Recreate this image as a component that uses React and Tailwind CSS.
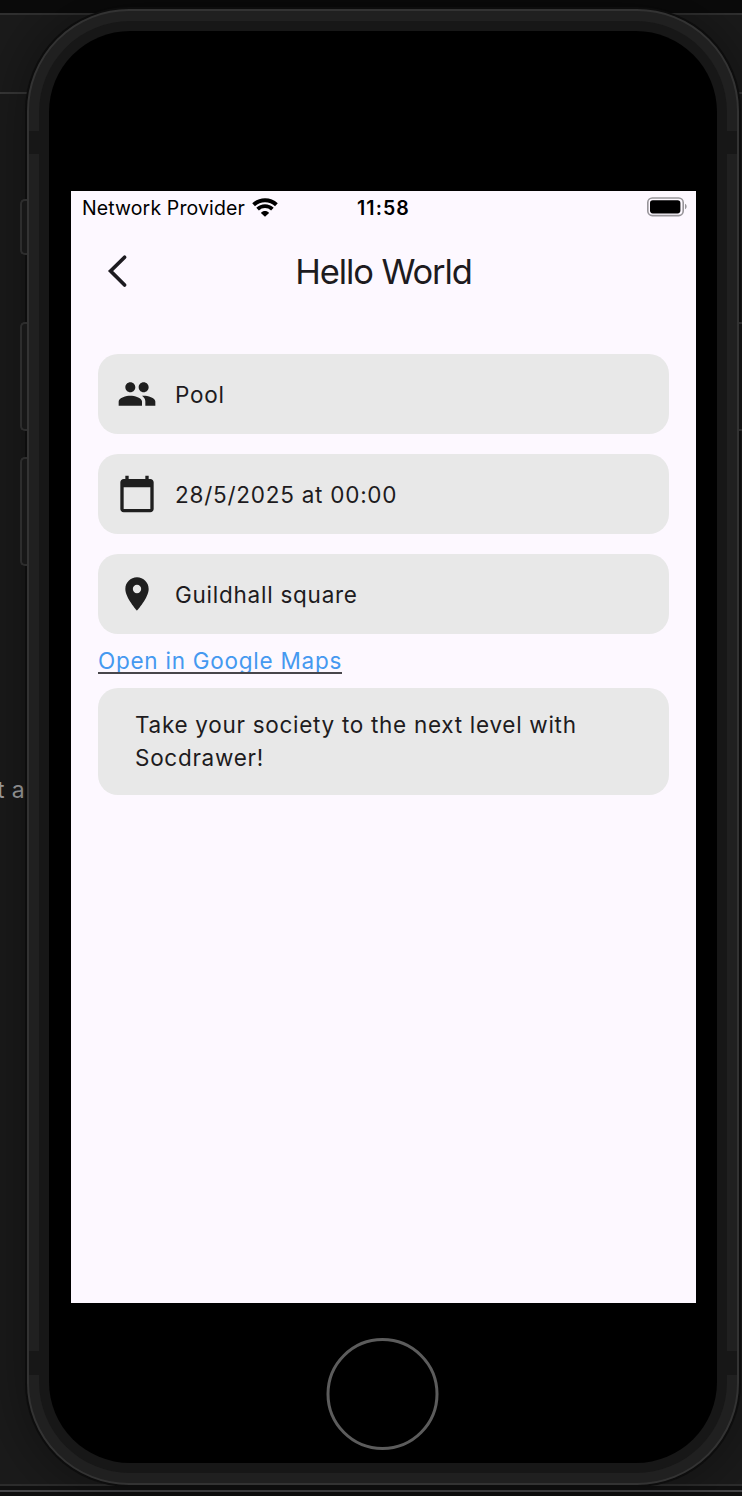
import React from "react";
import { MdPeople, MdCalendarToday, MdLocationOn } from "react-icons/md";

function Backdrop() {
  return (
    <div className="[grid-area:1/1] flex flex-col bg-[#1b1b1b] overflow-hidden">
      <div className="h-[13px] bg-[#0b0b0b]" />
      <div className="h-[2px] bg-[#303030]" />
      <div className="h-[77px]" />
      <div className="h-[2px] bg-[#383838]" />
      <div className="h-[1390px] pt-[682px]">
        <div className="w-[25px] flex justify-end whitespace-nowrap text-[23px] leading-[28px] tracking-[0.4px] text-[#a6a6a6]">
          t a
        </div>
      </div>
      <div className="h-[2px] bg-[#2d2d2d]" />
      <div className="h-[4px] bg-[#111111]" />
      <div className="h-[2px] bg-[#48484b]" />
      <div className="h-[4px] bg-[#101010]" />
    </div>
  );
}

function SideButtons() {
  return (
    <div className="[grid-area:1/1] z-10 flex justify-between">
      <div className="ml-[20px] flex w-[7px] flex-col">
        <div className="mt-[199px] h-[56px] rounded-l-[5px] border-2 border-r-0 border-[#2d2d2d] bg-[#171717]" />
        <div className="mt-[67px] h-[109px] rounded-l-[5px] border-2 border-r-0 border-[#2d2d2d] bg-[#171717]" />
        <div className="mt-[26px] h-[109px] rounded-l-[5px] border-2 border-r-0 border-[#2d2d2d] bg-[#171717]" />
      </div>
      <div className="w-[3px]">
        <div className="mt-[322px] h-[109px] border-y-2 border-[#2d2d2d] bg-[#131313]" />
      </div>
    </div>
  );
}

function AntennaBands() {
  return (
    <div className="[grid-area:1/1] flex flex-col">
      <div className="mt-[120px] flex h-[23px] justify-between">
        <div className="w-[10px] bg-[#171717]" />
        <div className="w-[10px] bg-[#171717]" />
      </div>
      <div className="mt-[1197px] flex h-[24px] justify-between">
        <div className="w-[10px] bg-[#171717]" />
        <div className="w-[10px] bg-[#171717]" />
      </div>
    </div>
  );
}

function StatusBar() {
  return (
    <div className="flex h-[34px] items-center pl-[11px] pr-[9px] text-black">
      <span className="mt-[2px] w-[163px] whitespace-nowrap text-[19.5px] leading-none tracking-[0.12px]">Network Provider</span>
      <svg className="ml-[7px]" width="26" height="20" viewBox="0 0 26 20" fill="none">
        <path d="M1.6 6.8C8 0.8 18 0.8 24.4 6.8" stroke="#000" strokeWidth="4" />
        <path d="M5.6 11.1C9.7 7.1 16.3 7.1 20.4 11.1" stroke="#000" strokeWidth="3.7" />
        <path d="M13 18.8L8.9 14.9C11.2 12.4 14.8 12.4 17.1 14.9Z" fill="#000" />
      </svg>
      <span className="ml-[79px] mt-[2px] whitespace-nowrap text-[19.5px] font-semibold leading-none tracking-[1.1px]">11:58</span>
      <svg className="ml-auto -mt-[2px]" width="40" height="20" viewBox="0 0 40 20" fill="none">
        <rect x="0.8" y="1" width="35.4" height="17.6" rx="4.5" stroke="#98959a" strokeWidth="1.6" />
        <rect x="3" y="3.2" width="30.4" height="13.2" rx="2.8" fill="#000" />
        <path d="M38 6.8C40.2 8 40.2 11 38 12.2Z" fill="#98959a" />
      </svg>
    </div>
  );
}

function AppBar() {
  return (
    <div className="grid h-[93px] grid-cols-[93px_1fr_93px] items-center">
      <svg className="-mt-[2px] ml-[36px]" width="22" height="34" viewBox="0 0 22 34" fill="none">
        <path d="M17.6 3.2L3.6 17L17.6 31" stroke="#1d1b20" strokeWidth="3.7" strokeLinecap="round" strokeLinejoin="miter" />
      </svg>
      <h1 className="mt-[2px] whitespace-nowrap text-center text-[34.5px] font-normal leading-none tracking-[-1.1px] text-[#1d1b20]">
        Hello World
      </h1>
    </div>
  );
}

function InfoRow({ icon: Icon, children }) {
  return (
    <div className="flex h-[80px] items-center rounded-[20px] bg-[#e8e8e8] pl-[19px]">
      <Icon className="size-[40px] text-[#1f1f1f]" />
      <span className="ml-[18px] mt-[2px] whitespace-nowrap text-[22.5px] leading-none tracking-[0.75px]">{children}</span>
    </div>
  );
}

function Screen() {
  return (
    <div className="ml-[22px] mt-[160px] flex h-[1112px] w-[625px] flex-col bg-[#fdf8ff] text-[#1d1b20]">
      <StatusBar />
      <AppBar />
      <div className="mt-[36.3px] flex flex-col pl-[27px] pr-[27px]">
        <div className="flex flex-col gap-[20px]">
          <InfoRow icon={MdPeople}>Pool</InfoRow>
          <InfoRow icon={MdCalendarToday}>28/5/2025 at 00:00</InfoRow>
          <InfoRow icon={MdLocationOn}>Guildhall square</InfoRow>
        </div>
        <a className="mt-[12px] h-[28px] w-[244px] overflow-hidden whitespace-nowrap border-b-2 border-[#48464b] text-[22.5px] leading-[30px] tracking-[0.75px] text-[#4599f0]">
          Open in Google Maps
        </a>
        <p className="mt-[13.5px] h-[107px] rounded-[20px] bg-[#e8e8e8] pl-[37px] pt-[20px] text-[22.5px] leading-[33.3px] tracking-[0.71px]">
          Take your society to the next level with
          <br />
          Socdrawer!
        </p>
      </div>
    </div>
  );
}

function Phone() {
  return (
    <div className="[grid-area:1/1] ml-[27px] mt-[9px] grid h-[1476px] w-[712px] rounded-[102px] border-2 border-[#333333] bg-[#202020] shadow-[0_0_0_2px_#0d0d0d,0_0_60px_4px_rgba(0,0,0,0.4)]">
      <AntennaBands />
      <div className="[grid-area:1/1] m-[10px] rounded-[91px] bg-[#171717] p-[10px]">
        <div className="h-[1432px] w-[668px] rounded-[81px] bg-black pt-px">
          <div className="-mt-px flow-root">
            <Screen />
          </div>
          <div className="mx-auto mt-[35px] h-[112px] w-[112px] -translate-x-[0.5px] rounded-full border-3 border-[#5c5c5c]" />
        </div>
      </div>
    </div>
  );
}

export default function App() {
  return (
    <div className="grid h-[1496px] w-[742px] overflow-hidden bg-[#1b1b1b] font-['Inter',sans-serif]">
      <Backdrop />
      <SideButtons />
      <Phone />
    </div>
  );
}
